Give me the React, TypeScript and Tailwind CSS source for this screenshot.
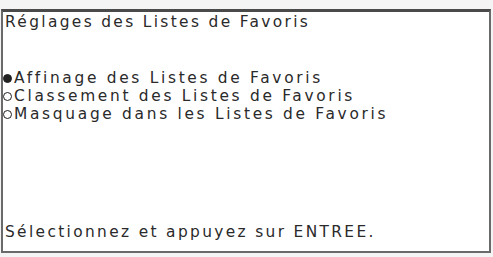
import React from 'react';

const Item = ({ label, selected }: { label: string; selected?: boolean }) => (
  <div className="flex items-center h-[18px]">
    <span
      className={`w-[9px] h-[9px] rounded-full border-[1.5px] border-[#222] shrink-0 ${selected ? "bg-[#222]" : "bg-white"}`}
    />
    <span className="ml-[2px] whitespace-nowrap tracking-[2.7px]">{label}</span>
  </div>
);

export default function App() {
  return (
    <div className="w-[493px] h-[257px] bg-[#f4f4f4] pt-[9px] pl-[1px] pr-[2px] pb-[4px] overflow-hidden">
      <div
        className="h-full bg-white border-t-[3px] border-t-[#4a4a4a] border-x-2 border-b-2 border-x-[#6a6a6a] border-b-[#6a6a6a] flex flex-col text-[#2a2a2a] text-[15.4px] leading-[18px] tracking-[2.35px]"
        style={{ fontFamily: '"DejaVu Sans", sans-serif' }}
      >
        <div className="pl-[2px] pt-[1px]">Réglages des Listes de Favoris</div>
        <div className="mt-[38px] flex flex-col">
          <Item label="Affinage des Listes de Favoris" selected />
          <Item label="Classement des Listes de Favoris" />
          <Item label="Masquage dans les Listes de Favoris" />
        </div>
        <div className="mt-auto pl-[2px] pb-[10px]">Sélectionnez et appuyez sur ENTREE.</div>
      </div>
    </div>
  );
}
